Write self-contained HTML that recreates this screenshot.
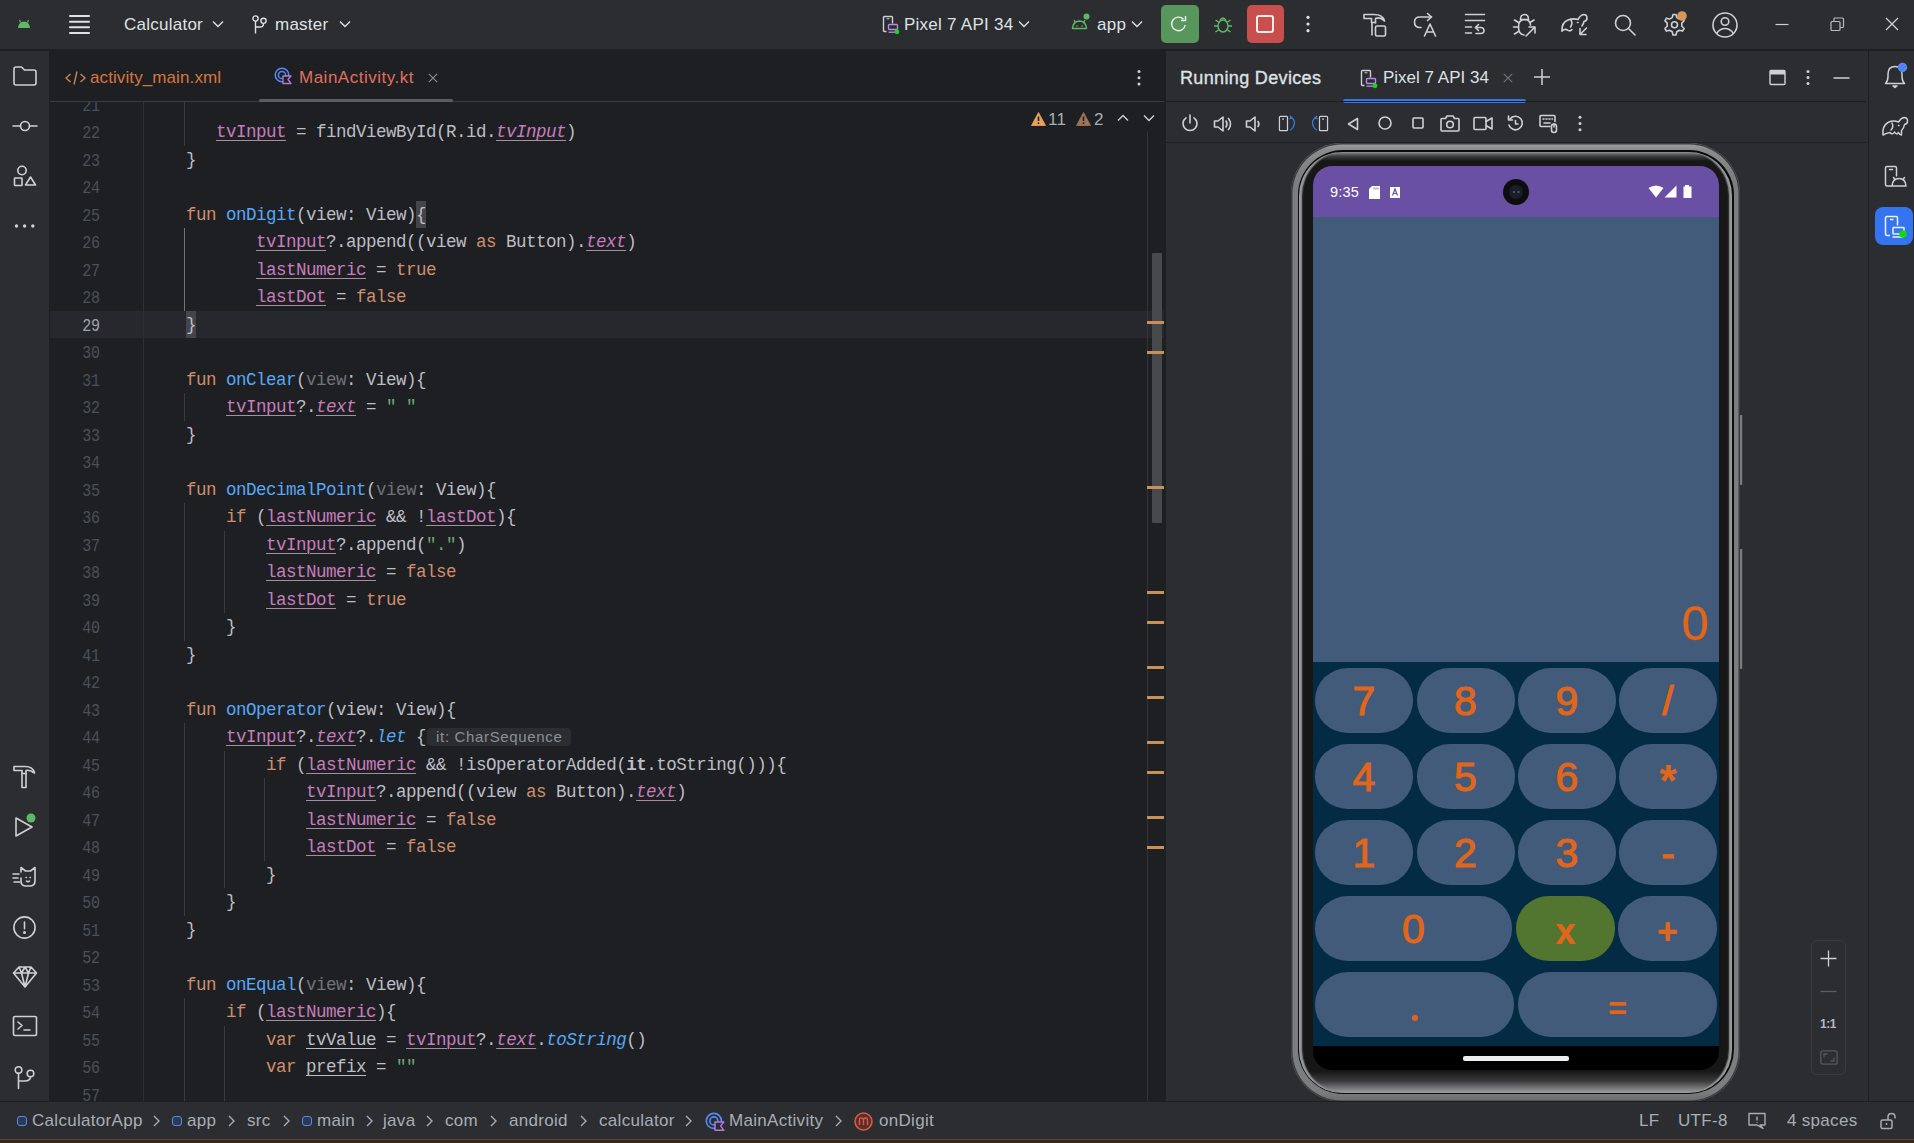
<!DOCTYPE html>
<html><head><meta charset="utf-8">
<style>
*{box-sizing:border-box;margin:0;padding:0}
html,body{width:1914px;height:1143px;overflow:hidden;background:#2b2d30;font-family:"Liberation Sans",sans-serif;color:#dfe1e5}
.abs{position:absolute}
svg{position:absolute;overflow:visible}
#title{left:0;top:0;width:1914px;height:49px;background:#2b2d30}
#tborder{left:0;top:49px;width:1914px;height:2px;background:#1e1f22}
.tt{position:absolute;font-size:17px;color:#dfe1e5;white-space:nowrap;top:15px;letter-spacing:0.25px}
#lstrip{left:0;top:51px;width:49px;height:1050px;background:#2b2d30}
#editor{left:50px;top:51px;width:1114px;height:1050px;background:#1e1f22;overflow:hidden}
#tabs{left:0;top:0;width:1114px;height:51px;background:#1e1f22;border-bottom:1px solid #393b40}
#code{left:0;top:51px;width:1114px;height:999px;overflow:hidden}
.ln{position:absolute;left:0;width:49.5px;text-align:right;font-family:"Liberation Mono",monospace;font-size:17.5px;letter-spacing:-0.5px;color:#4b5059;height:27.5px;line-height:30px;transform:scaleX(0.86);transform-origin:right center}
.cl{position:absolute;left:96px;font-family:"Liberation Mono",monospace;font-size:17.5px;letter-spacing:-0.5px;color:#bcbec4;height:27.5px;line-height:29px;white-space:pre}
.k{color:#cf8e6d}.f{color:#56a8f5}.p{color:#c77dbb;text-decoration:underline;text-underline-offset:3px;text-decoration-thickness:1px;text-decoration-color:#a1909e}
.i{font-style:italic}.s{color:#6aab73}.u{color:#6f737a}.b{font-weight:bold}
.ul{text-decoration:underline;text-underline-offset:3px;text-decoration-thickness:1px}
#vsep{left:1164px;top:51px;width:2px;height:1050px;background:#1e1f22}
#rpanel{left:1166px;top:51px;width:702px;height:1050px;background:#2b2d30}
#rstrip{left:1868px;top:51px;width:46px;height:1050px;background:#2b2d30;border-left:1px solid #1e1f22}
#status{left:0;top:1101px;width:1914px;height:38px;background:#2b2d30;border-top:1px solid #1e1f22}
#bottomline{left:0;top:1139px;width:1914px;height:4px;background:linear-gradient(#55473c 0,#55473c 1px,#3a2617 1px)}
.tab{position:absolute;top:17px;font-size:17px;white-space:nowrap}
.st{position:absolute;top:9px;font-size:17px;color:#a8adb5;white-space:nowrap;letter-spacing:0.3px}
.ln.cur{color:#a1a3ab}
.ig{position:absolute;width:1px;background:#393b40}
.ig.br{background:#6f737a}
.bm{display:inline-block;vertical-align:top;height:27.5px;background:#43454a}
.hint{display:inline-block;vertical-align:top;margin-top:5px;margin-left:1px;height:18px;line-height:18px;padding:0 9px 0 9px;border-radius:4px;background:#2b2d30;color:#8c8f96;font-family:"Liberation Sans",sans-serif;font-size:15px;letter-spacing:0.65px}
.btn{position:absolute;height:65px;border-radius:33px/32px;color:#e2661a;font-size:41px;font-weight:normal;-webkit-text-stroke:1px #e2661a;text-align:center;line-height:67px}
.btn span{display:inline-block}
.btn .op{font-weight:bold;-webkit-text-stroke:0.2px #e2661a;position:relative;top:1px;font-size:36px}
</style></head>
<body>
<div id="title" class="abs">
<!-- android logo -->
<svg style="left:17px;top:19px" width="14" height="10" viewBox="0 0 14 10"><path d="M1 9 Q1.5 3 7 2.5 Q12.5 3 13 9 Z" fill="#5fb865"/><path d="M3.5 3.5 L2.5 1 M10.5 3.5 L11.5 1" stroke="#5fb865" stroke-width="1.2"/></svg>
<!-- hamburger -->
<svg style="left:69px;top:14px" width="21" height="20" viewBox="0 0 21 20"><path d="M1 2h19M1 7.7h19M1 13.3h19M1 19h19" stroke="#dfe1e5" stroke-width="2" stroke-linecap="round"/></svg>
<div class="tt" style="left:124px">Calculator</div>
<svg style="left:212px;top:20px" width="12" height="8" viewBox="0 0 12 8"><path d="M1 1.5 L6 6.5 L11 1.5" stroke="#dfe1e5" stroke-width="1.4" fill="none"/></svg>
<!-- branch -->
<svg style="left:252px;top:15px" width="16" height="19" viewBox="0 0 16 19"><circle cx="3.5" cy="3.5" r="2.6" stroke="#dfe1e5" stroke-width="1.4" fill="none"/><circle cx="11.5" cy="5.8" r="2.6" stroke="#dfe1e5" stroke-width="1.4" fill="none"/><path d="M3.5 6.1 V18.5 M3.5 12 H8 Q11.5 12 11.5 8.4" stroke="#dfe1e5" stroke-width="1.4" fill="none"/></svg>
<div class="tt" style="left:275px">master</div>
<svg style="left:339px;top:20px" width="12" height="8" viewBox="0 0 12 8"><path d="M1 1.5 L6 6.5 L11 1.5" stroke="#dfe1e5" stroke-width="1.4" fill="none"/></svg>
<!-- device selector -->
<svg style="left:882px;top:15px" width="18" height="20" viewBox="0 0 18 20"><path d="M4.5 16.5 H2.5 Q1.5 16.5 1.5 15.5 V2.5 Q1.5 1.5 2.5 1.5 H9.5 Q10.5 1.5 10.5 2.5 V8.5" stroke="#ced0d6" stroke-width="1.4" fill="none"/><path d="M5 3.8 h2" stroke="#ced0d6" stroke-width="1.1" stroke-linecap="round"/><rect x="6.5" y="9.5" width="9" height="5" rx="1" stroke="#b88be6" stroke-width="1.4" fill="none"/><path d="M6.5 17.2 h7" stroke="#b88be6" stroke-width="1.3"/><circle cx="15" cy="16.8" r="2.4" fill="#11dd11"/></svg>
<div class="tt" style="left:904px">Pixel 7 API 34</div>
<svg style="left:1018px;top:20px" width="12" height="8" viewBox="0 0 12 8"><path d="M1 1.5 L6 6.5 L11 1.5" stroke="#dfe1e5" stroke-width="1.4" fill="none"/></svg>
<!-- app -->
<svg style="left:1071px;top:13px" width="20" height="18" viewBox="0 0 20 18"><path d="M1.5 15.5 Q2 8.5 8.5 8 Q15 8.5 15.5 15.5 Z" stroke="#5fb865" stroke-width="1.5" fill="none" stroke-linejoin="round"/><path d="M4.5 9.5 L3 7 M12.5 9.5 L14 7" stroke="#5fb865" stroke-width="1.4"/><circle cx="6" cy="13" r="0.8" fill="#5fb865"/><circle cx="11" cy="13" r="0.8" fill="#5fb865"/><circle cx="15.5" cy="3.5" r="3" fill="#5fb865"/></svg>
<div class="tt" style="left:1097px">app</div>
<svg style="left:1131px;top:20px" width="12" height="8" viewBox="0 0 12 8"><path d="M1 1.5 L6 6.5 L11 1.5" stroke="#dfe1e5" stroke-width="1.4" fill="none"/></svg>
<!-- run buttons -->
<div class="abs" style="left:1161px;top:5px;width:38px;height:38px;border-radius:5px;background:#57965c"></div>
<svg style="left:1171px;top:15px" width="17" height="18" viewBox="0 0 17 18"><path d="M14.2 10 A6.8 6.8 0 1 1 12.5 4.3" stroke="#eef0ee" stroke-width="1.4" fill="none"/><path d="M14.5 1 V5.5 H10" stroke="#eef0ee" stroke-width="1.4" fill="none"/></svg>
<svg style="left:1213px;top:15px" width="20" height="18" viewBox="0 0 20 18"><ellipse cx="10" cy="11" rx="5" ry="6" stroke="#5fb865" stroke-width="1.5" fill="none"/><path d="M7 5.5 Q10 0.5 13 5.5" stroke="#5fb865" stroke-width="1.5" fill="none"/><path d="M5 11 H1 M15 11 H19 M5.5 7 L2.5 5 M14.5 7 L17.5 5 M5.5 15 L2.5 17 M14.5 15 L17.5 17" stroke="#5fb865" stroke-width="1.5"/></svg>
<div class="abs" style="left:1247px;top:5px;width:37px;height:38px;border-radius:5px;background:#c94f4f"></div>
<div class="abs" style="left:1256px;top:15px;width:18px;height:18px;border-radius:3px;border:2px solid #f3eee6"></div>
<svg style="left:1305px;top:15px" width="6" height="19" viewBox="0 0 6 19"><circle cx="3" cy="2.3" r="1.6" fill="#dfe1e5"/><circle cx="3" cy="9" r="1.6" fill="#dfe1e5"/><circle cx="3" cy="15.7" r="1.6" fill="#dfe1e5"/></svg>
<!-- right icons -->
<svg style="left:1363px;top:13px" width="24" height="24" viewBox="0 0 24 24" fill="none" stroke="#ced0d6" stroke-width="1.6" stroke-linejoin="round"><path d="M1 1.5 H11 Q20 1.5 21.5 8 Q17 3.5 12.5 5.5 L12.5 9.5 L8.5 9.5 L8.5 5.5 L1 5.5 Z"/><path d="M9 9.5 V22.5 M12.5 9.5 V10.5"/><rect x="12.5" y="13" width="10" height="10" rx="1.5"/></svg>
<svg style="left:1413px;top:13px" width="24" height="24" viewBox="0 0 24 24" fill="none" stroke="#ced0d6" stroke-width="1.6" stroke-linejoin="round" stroke-linecap="round"><path d="M18.5 4 H7 Q1.5 4 1.5 9 Q1.5 14.5 7 14.5 H8"/><path d="M14.5 0.5 L18.5 4 L14.5 7.5"/><path d="M11.5 23 L17 11 L22.5 23 M13.5 19 H20.5"/></svg>
<svg style="left:1464px;top:13px" width="22" height="22" viewBox="0 0 22 22" fill="none" stroke="#ced0d6" stroke-width="1.6" stroke-linecap="round"><path d="M1.5 1.5 H20.5 M1.5 7.5 H20.5 M1.5 14 H7.5 M1.5 20 H7.5"/><path d="M12 14.5 H16.5 Q20 14.5 20 17.5 Q20 20.5 16.5 20.5 H12"/><path d="M14.5 11.5 L11.5 14.5 L14.5 17.5"/></svg>
<svg style="left:1513px;top:13px" width="24" height="24" viewBox="0 0 24 24" fill="none" stroke="#ced0d6" stroke-width="1.6" stroke-linejoin="round" stroke-linecap="round"><path d="M7.5 6.5 Q7.5 1.5 11.5 1.5 Q15.5 1.5 15.5 6.5 Z"/><path d="M17.5 12 Q17 6.5 11.5 6.5 Q5.5 6.5 5.5 14 Q5.5 21.5 11 22"/><path d="M5.5 9.5 L1.5 7 M5.5 14 H0.5 M5.5 18.5 L1.5 21 M17 9.5 L21 7"/><path d="M13 23 L22 14 M16 14 H22 V20"/></svg>
<svg style="left:1561px;top:13px" width="27" height="24" viewBox="0 0 27 24" fill="none" stroke="#ced0d6" stroke-width="1.6" stroke-linejoin="round" stroke-linecap="round"><path d="M1 18 Q0.5 9.5 7 7 Q12 5 17 6.5 Q19.5 2 22.5 1.5 Q26 1.5 26 5 Q26 8 23 8.5 Q22.5 11 21 13"/><path d="M1 18 Q4 15.5 6.5 17 Q9 19 11 16.5"/><path d="M10 7 Q12 10.5 9.5 14"/><path d="M16.5 9.5 h0.5"/><path d="M25.5 15 L19 21.5 M19 15.5 V21.5 H25"/></svg>
<svg style="left:1614px;top:14px" width="22" height="22" viewBox="0 0 22 22" fill="none" stroke="#ced0d6" stroke-width="1.6"><circle cx="9" cy="9" r="7.5"/><path d="M14.5 14.5 L21 21" stroke-linecap="round"/></svg>
<svg style="left:1663px;top:13px" width="24" height="24" viewBox="0 0 24 24" fill="none" stroke="#ced0d6" stroke-width="1.6" stroke-linejoin="round"><path d="M10 1.5 H13 L13.8 4.6 L16.5 6.1 L19.6 5.2 L21.1 7.8 L18.8 10.1 V13.2 L21.1 15.5 L19.6 18.1 L16.5 17.2 L13.8 18.8 L13 22 H10 L9.2 18.8 L6.5 17.2 L3.4 18.1 L1.9 15.5 L4.2 13.2 V10.1 L1.9 7.8 L3.4 5.2 L6.5 6.1 L9.2 4.6 Z"/><circle cx="11.5" cy="11.7" r="3"/></svg>
<svg style="left:1676px;top:10px" width="12" height="12"><circle cx="6" cy="6" r="4.8" fill="#d8955c"/></svg>
<svg style="left:1712px;top:12px" width="26" height="26" viewBox="0 0 26 26" fill="none" stroke="#ced0d6" stroke-width="1.6"><circle cx="13" cy="13" r="12"/><circle cx="13" cy="9.5" r="3.8"/><path d="M4.5 21.5 Q8 16.5 13 16.5 Q18 16.5 21.5 21.5"/></svg>
<svg style="left:1775px;top:20px" width="14" height="8"><path d="M0.5 4.5 H13.5" stroke="#ced0d6" stroke-width="1.2"/></svg>
<svg style="left:1830px;top:17px" width="15" height="15" viewBox="0 0 15 15" fill="none" stroke="#b8bac0" stroke-width="1.2"><rect x="1" y="4.5" width="9" height="9" rx="1"/><path d="M4 4.5 V2 Q4 1 5 1 H12.5 Q13.5 1 13.5 2 V9.5 Q13.5 10.5 12.5 10.5 H10"/></svg>
<svg style="left:1885px;top:17px" width="14" height="14" viewBox="0 0 14 14"><path d="M1 1 L13 13 M13 1 L1 13" stroke="#ced0d6" stroke-width="1.3"/></svg>
</div>
<div id="tborder" class="abs"></div>
<div id="lstrip" class="abs">
<svg style="left:13px;top:15px" width="24" height="20" viewBox="0 0 24 20" fill="none" stroke="#ced0d6" stroke-width="1.6" stroke-linejoin="round" stroke-linecap="round"><path d="M1 3 Q1 1 3 1 H8.5 L11.5 4 H21 Q23 4 23 6 V17 Q23 19 21 19 H3 Q1 19 1 17 Z"/></svg>
<svg style="left:12px;top:69px" width="26" height="12" viewBox="0 0 26 12" fill="none" stroke="#ced0d6" stroke-width="1.6" stroke-linejoin="round" stroke-linecap="round"><circle cx="13" cy="6" r="4.5"/><path d="M1 6 H8.5 M17.5 6 H25"/></svg>
<svg style="left:13px;top:114px" width="24" height="22" viewBox="0 0 24 22" fill="none" stroke="#ced0d6" stroke-width="1.6" stroke-linejoin="round" stroke-linecap="round"><circle cx="9" cy="5.5" r="4.2"/><rect x="1.5" y="13" width="7.5" height="7.5" rx="0.5"/><path d="M17.5 12 L22.5 20 H12.5 Z"/></svg>
<svg style="left:13px;top:171px" width="24" height="8" viewBox="0 0 24 8"><circle cx="3.5" cy="4" r="1.7" fill="#ced0d6"/><circle cx="11.6" cy="4" r="1.7" fill="#ced0d6"/><circle cx="19.8" cy="4" r="1.7" fill="#ced0d6"/></svg>
<svg style="left:13px;top:714px" width="23" height="24" viewBox="0 0 23 24" fill="none" stroke="#ced0d6" stroke-width="1.6" stroke-linejoin="round" stroke-linecap="round"><path d="M1 1.5 H12 Q20 1.5 21.5 8 Q17 4.5 13 5.5 V8.5 H9 V5.5 H1 Z"/><path d="M9 8.5 V22.5 H13 V8.5"/></svg>
<svg style="left:14px;top:764px" width="24" height="24" viewBox="0 0 24 24" fill="none" stroke="#ced0d6" stroke-width="1.6" stroke-linejoin="round" stroke-linecap="round"><path d="M2 3 L18 12 L2 21 Z"/></svg>
<svg style="left:25px;top:761px" width="12" height="12"><circle cx="6" cy="6" r="4.5" fill="#5fb865"/></svg>
<svg style="left:12px;top:815px" width="26" height="22" viewBox="0 0 26 22" fill="none" stroke="#ced0d6" stroke-width="1.6" stroke-linejoin="round" stroke-linecap="round"><path d="M9 6 L9 1.5 L13.5 5 H18.5 L23 1.5 V15 Q23 20 17.5 20 H14 Q9 20 9 15 V12"/><path d="M1 8 H7 M1 12 H6 M2 16 H8"/><path d="M14 11.5 h0.3 M18 11.5 h0.3 M14.5 15 Q16 16.5 17.5 15"/></svg>
<svg style="left:12px;top:864px" width="26" height="26" viewBox="0 0 26 26" fill="none" stroke="#ced0d6" stroke-width="1.6" stroke-linejoin="round" stroke-linecap="round"><circle cx="12.5" cy="12.5" r="10.6"/><path d="M12.5 7 V13.8"/><circle cx="12.5" cy="17.6" r="0.7" fill="#ced0d6"/></svg>
<svg style="left:12px;top:914px" width="26" height="24" viewBox="0 0 26 24" fill="none" stroke="#ced0d6" stroke-width="1.6" stroke-linejoin="round" stroke-linecap="round"><path d="M7 2 H19 L24.5 8 L13 22 L1.5 8 Z M1.5 8 H24.5 M9.5 8 L13 22 L16.5 8 M7 2 L9.5 8 L13 2 L16.5 8 L19 2"/></svg>
<svg style="left:12px;top:964px" width="26" height="22" viewBox="0 0 26 22" fill="none" stroke="#ced0d6" stroke-width="1.6" stroke-linejoin="round" stroke-linecap="round"><rect x="1.5" y="1.5" width="23" height="19" rx="1.5"/><path d="M6 7 L10 10.5 L6 14 M12 15 H18"/></svg>
<svg style="left:13px;top:1014px" width="24" height="26" viewBox="0 0 24 26" fill="none" stroke="#ced0d6" stroke-width="1.6" stroke-linejoin="round" stroke-linecap="round"><circle cx="5.5" cy="5" r="3.3"/><circle cx="17.5" cy="8.5" r="3.3"/><path d="M5.5 8.3 V23.5 M5.5 16 H11.5 Q17.5 16 17.5 11.8"/></svg>
</div>
<div id="editor" class="abs">
  <div id="tabs" class="abs">
<svg style="left:15px;top:20px" width="21" height="14" viewBox="0 0 21 14" fill="none" stroke="#c9834f" stroke-width="1.4"><path d="M5.5 3 L1 7 L5.5 11 M15.5 3 L20 7 L15.5 11 M12 0.5 L9 13.5"/></svg>
<div class="tab" style="left:40px;color:#d5763f;letter-spacing:0.1px">activity_main.xml</div>
<svg style="left:224px;top:16px" width="18" height="18" viewBox="0 0 18 18"><circle cx="8" cy="8" r="6.8" fill="none" stroke="#548af7" stroke-width="1.5"/><circle cx="8" cy="8" r="3.6" fill="none" stroke="#548af7" stroke-width="1.5"/><path d="M9 9 H17 L14 12.5 L17 16.5 H9 Z" fill="#1e1f22" stroke="#b57ad9" stroke-width="1.3" stroke-linejoin="round"/></svg>
<div class="tab" style="left:249px;color:#e0705d;letter-spacing:0.5px">MainActivity.kt</div>
<svg style="left:378px;top:22px" width="10" height="10" viewBox="0 0 10 10"><path d="M0.8 0.8 L9.2 9.2 M9.2 0.8 L0.8 9.2" stroke="#8c8f96" stroke-width="1.1"/></svg>
<div class="abs" style="left:209px;top:48px;width:194px;height:3px;border-radius:2px;background:#5a5d63"></div>
<svg style="left:1086px;top:18px" width="6" height="18" viewBox="0 0 6 18"><circle cx="3" cy="2.5" r="1.5" fill="#ced0d6"/><circle cx="3" cy="8.8" r="1.5" fill="#ced0d6"/><circle cx="3" cy="15" r="1.5" fill="#ced0d6"/></svg>
</div>
  <div id="code" class="abs">
<div class="abs" style="left:0;top:208.75px;width:1114px;height:27.5px;background:#26282e"></div>
<div class="abs" style="left:93px;top:0;width:1px;height:999px;background:#2d2f33"></div>
<div class="ln" style="top:-11.25px">21</div>
<div class="ln" style="top:16.25px">22</div>
<div class="cl" style="top:16.25px">       <span class="p">tvInput</span> = findViewById(R.id.<span class="p i">tvInput</span>)</div>
<div class="ln" style="top:43.75px">23</div>
<div class="cl" style="top:43.75px">    }</div>
<div class="ln" style="top:71.25px">24</div>
<div class="ln" style="top:98.75px">25</div>
<div class="cl" style="top:98.75px">    <span class="k">fun</span> <span class="f">onDigit</span>(view: View)<span class="bm">{</span></div>
<div class="ln" style="top:126.25px">26</div>
<div class="cl" style="top:126.25px">           <span class="p">tvInput</span>?.append((view <span class="k">as</span> Button).<span class="p i">text</span>)</div>
<div class="ln" style="top:153.75px">27</div>
<div class="cl" style="top:153.75px">           <span class="p">lastNumeric</span> = <span class="k">true</span></div>
<div class="ln" style="top:181.25px">28</div>
<div class="cl" style="top:181.25px">           <span class="p">lastDot</span> = <span class="k">false</span></div>
<div class="ln cur" style="top:208.75px">29</div>
<div class="cl" style="top:208.75px">    <span class="bm">}</span></div>
<div class="ln" style="top:236.25px">30</div>
<div class="ln" style="top:263.75px">31</div>
<div class="cl" style="top:263.75px">    <span class="k">fun</span> <span class="f">onClear</span>(<span class="u">view</span>: View){</div>
<div class="ln" style="top:291.25px">32</div>
<div class="cl" style="top:291.25px">        <span class="p">tvInput</span>?.<span class="p i">text</span> = <span class="s">" "</span></div>
<div class="ln" style="top:318.75px">33</div>
<div class="cl" style="top:318.75px">    }</div>
<div class="ln" style="top:346.25px">34</div>
<div class="ln" style="top:373.75px">35</div>
<div class="cl" style="top:373.75px">    <span class="k">fun</span> <span class="f">onDecimalPoint</span>(<span class="u">view</span>: View){</div>
<div class="ln" style="top:401.25px">36</div>
<div class="cl" style="top:401.25px">        <span class="k">if</span> (<span class="p">lastNumeric</span> &amp;&amp; !<span class="p">lastDot</span>){</div>
<div class="ln" style="top:428.75px">37</div>
<div class="cl" style="top:428.75px">            <span class="p">tvInput</span>?.append(<span class="s">"."</span>)</div>
<div class="ln" style="top:456.25px">38</div>
<div class="cl" style="top:456.25px">            <span class="p">lastNumeric</span> = <span class="k">false</span></div>
<div class="ln" style="top:483.75px">39</div>
<div class="cl" style="top:483.75px">            <span class="p">lastDot</span> = <span class="k">true</span></div>
<div class="ln" style="top:511.25px">40</div>
<div class="cl" style="top:511.25px">        }</div>
<div class="ln" style="top:538.75px">41</div>
<div class="cl" style="top:538.75px">    }</div>
<div class="ln" style="top:566.25px">42</div>
<div class="ln" style="top:593.75px">43</div>
<div class="cl" style="top:593.75px">    <span class="k">fun</span> <span class="f">onOperator</span>(view: View){</div>
<div class="ln" style="top:621.25px">44</div>
<div class="cl" style="top:621.25px">        <span class="p">tvInput</span>?.<span class="p i">text</span>?.<span class="f i">let</span> {<span class="hint">it: CharSequence</span></div>
<div class="ln" style="top:648.75px">45</div>
<div class="cl" style="top:648.75px">            <span class="k">if</span> (<span class="p">lastNumeric</span> &amp;&amp; !isOperatorAdded(<span class="b">it</span>.toString())){</div>
<div class="ln" style="top:676.25px">46</div>
<div class="cl" style="top:676.25px">                <span class="p">tvInput</span>?.append((view <span class="k">as</span> Button).<span class="p i">text</span>)</div>
<div class="ln" style="top:703.75px">47</div>
<div class="cl" style="top:703.75px">                <span class="p">lastNumeric</span> = <span class="k">false</span></div>
<div class="ln" style="top:731.25px">48</div>
<div class="cl" style="top:731.25px">                <span class="p">lastDot</span> = <span class="k">false</span></div>
<div class="ln" style="top:758.75px">49</div>
<div class="cl" style="top:758.75px">            }</div>
<div class="ln" style="top:786.25px">50</div>
<div class="cl" style="top:786.25px">        }</div>
<div class="ln" style="top:813.75px">51</div>
<div class="cl" style="top:813.75px">    }</div>
<div class="ln" style="top:841.25px">52</div>
<div class="ln" style="top:868.75px">53</div>
<div class="cl" style="top:868.75px">    <span class="k">fun</span> <span class="f">onEqual</span>(<span class="u">view</span>: View){</div>
<div class="ln" style="top:896.25px">54</div>
<div class="cl" style="top:896.25px">        <span class="k">if</span> (<span class="p">lastNumeric</span>){</div>
<div class="ln" style="top:923.75px">55</div>
<div class="cl" style="top:923.75px">            <span class="k">var</span> <span class="ul">tvValue</span> = <span class="p">tvInput</span>?.<span class="p i">text</span>.<span class="f i">toString</span>()</div>
<div class="ln" style="top:951.25px">56</div>
<div class="cl" style="top:951.25px">            <span class="k">var</span> <span class="ul">prefix</span> = <span class="s">""</span></div>
<div class="ln" style="top:978.75px">57</div>
<div class="ig" style="left:134px;top:-11.25px;height:55.00px"></div>
<div class="ig br" style="left:134px;top:126.25px;height:82.50px"></div>
<div class="ig" style="left:134px;top:291.25px;height:27.50px"></div>
<div class="ig" style="left:134px;top:401.25px;height:137.50px"></div>
<div class="ig" style="left:174px;top:428.75px;height:82.50px"></div>
<div class="ig" style="left:134px;top:621.25px;height:192.50px"></div>
<div class="ig" style="left:174px;top:648.75px;height:137.50px"></div>
<div class="ig" style="left:214px;top:676.25px;height:82.50px"></div>
<div class="ig" style="left:134px;top:896.25px;height:110.00px"></div>
<div class="ig" style="left:174px;top:923.75px;height:82.50px"></div>
</div>
<div class="abs" style="left:1097px;top:80px;width:1px;height:970px;background:#313337"></div>
<div class="abs" style="left:1102px;top:202px;width:10px;height:270px;border-radius:1px;background:#48494d"></div>
<div class="abs" style="left:1097px;top:270.1px;width:17px;height:3px;background:#c8915a"></div>
<div class="abs" style="left:1097px;top:300.1px;width:17px;height:3px;background:#c8915a"></div>
<div class="abs" style="left:1097px;top:435.4px;width:17px;height:3px;background:#c8915a"></div>
<div class="abs" style="left:1097px;top:539.8px;width:17px;height:3px;background:#c8915a"></div>
<div class="abs" style="left:1097px;top:569.7px;width:17px;height:3px;background:#c8915a"></div>
<div class="abs" style="left:1097px;top:614.8px;width:17px;height:3px;background:#c8915a"></div>
<div class="abs" style="left:1097px;top:644.8px;width:17px;height:3px;background:#c8915a"></div>
<div class="abs" style="left:1097px;top:689.7px;width:17px;height:3px;background:#c8915a"></div>
<div class="abs" style="left:1097px;top:719.5px;width:17px;height:3px;background:#c8915a"></div>
<div class="abs" style="left:1097px;top:764.7px;width:17px;height:3px;background:#c8915a"></div>
<div class="abs" style="left:1097px;top:794.9px;width:17px;height:3px;background:#c8915a"></div>
<svg style="left:981px;top:61px" width="15" height="14" viewBox="0 0 15 14"><path d="M7.5 0.5 L14.5 13.5 H0.5 Z" fill="#e8a25c" stroke="#e8a25c" stroke-linejoin="round" stroke-width="0.8"/><path d="M7.5 4.5 V9" stroke="#1e1f22" stroke-width="1.6"/><circle cx="7.5" cy="11.2" r="0.9" fill="#1e1f22"/></svg>
<div class="abs" style="left:998px;top:59px;font-size:17px;color:#a8adb5;letter-spacing:0.3px">11</div>
<svg style="left:1026px;top:61px" width="15" height="14" viewBox="0 0 15 14"><path d="M7.5 0.5 L14.5 13.5 H0.5 Z" fill="#9e7356" stroke="#9e7356" stroke-linejoin="round" stroke-width="0.8"/><path d="M7.5 4.5 V9" stroke="#1e1f22" stroke-width="1.6"/><circle cx="7.5" cy="11.2" r="0.9" fill="#1e1f22"/></svg>
<div class="abs" style="left:1044px;top:59px;font-size:17px;color:#a8adb5">2</div>
<svg style="left:1067px;top:63px" width="12" height="8" viewBox="0 0 12 8"><path d="M1 6.5 L6 1.5 L11 6.5" stroke="#ced0d6" stroke-width="1.4" fill="none"/></svg>
<svg style="left:1093px;top:63px" width="12" height="8" viewBox="0 0 12 8"><path d="M1 1.5 L6 6.5 L11 1.5" stroke="#ced0d6" stroke-width="1.4" fill="none"/></svg>
<div class="abs" style="left:1114px;top:51px;width:2px;height:999px;background:#2b2d30"></div>
</div>
<div id="vsep" class="abs"></div>
<div class="abs" style="left:49px;top:51px;width:1px;height:1050px;background:#1e1f22"></div>
<div id="rpanel" class="abs">
<div class="abs" style="left:14px;top:17px;font-size:18px;line-height:20px;font-weight:normal;-webkit-text-stroke:0.35px #dfe1e5;color:#dfe1e5;white-space:nowrap;letter-spacing:0.35px">Running Devices</div>
<svg style="left:194px;top:18px" width="18" height="20" viewBox="0 0 18 20"><path d="M4.5 16.5 H2.5 Q1.5 16.5 1.5 15.5 V2.5 Q1.5 1.5 2.5 1.5 H9.5 Q10.5 1.5 10.5 2.5 V8.5" stroke="#ced0d6" stroke-width="1.4" fill="none"/><path d="M5 3.8 h2" stroke="#ced0d6" stroke-width="1.1" stroke-linecap="round"/><rect x="6.5" y="9.5" width="9" height="5" rx="1" stroke="#b88be6" stroke-width="1.4" fill="none"/><path d="M6.5 17.2 h7" stroke="#b88be6" stroke-width="1.3"/><circle cx="15" cy="16.8" r="2.4" fill="#11dd11"/></svg>
<div class="abs" style="left:217px;top:17px;font-size:17px;color:#dfe1e5;white-space:nowrap">Pixel 7 API 34</div>
<svg style="left:337px;top:22px" width="10" height="10" viewBox="0 0 10 10"><path d="M0.8 0.8 L9.2 9.2 M9.2 0.8 L0.8 9.2" stroke="#6f737a" stroke-width="1.2"/></svg>
<svg style="left:367px;top:17px" width="18" height="18" viewBox="0 0 18 18"><path d="M9 1 V17 M1 9 H17" stroke="#ced0d6" stroke-width="1.5"/></svg>
<div class="abs" style="left:177px;top:48px;width:183px;height:4px;border-radius:2px;background:#3574f0"></div>
<svg style="left:603px;top:18px" width="17" height="17" viewBox="0 0 17 17"><rect x="1" y="1.5" width="15" height="14" rx="1" fill="none" stroke="#ced0d6" stroke-width="1.4"/><rect x="1" y="1.5" width="15" height="4" fill="#ced0d6"/></svg>
<svg style="left:639px;top:18px" width="6" height="18" viewBox="0 0 6 18"><circle cx="3" cy="2.5" r="1.5" fill="#ced0d6"/><circle cx="3" cy="8.5" r="1.5" fill="#ced0d6"/><circle cx="3" cy="14.5" r="1.5" fill="#ced0d6"/></svg>
<svg style="left:667px;top:25px" width="17" height="4"><path d="M0.5 2 H16.5" stroke="#ced0d6" stroke-width="1.5"/></svg>
<div class="abs" style="left:0;top:50px;width:700px;height:1px;background:#1e1f22"></div>
<div class="abs" style="left:0;top:91px;width:700px;height:1px;background:#1e1f22"></div>
<!-- device toolbar -->
<svg style="left:15px;top:63px" width="18" height="18" viewBox="0 0 18 18" fill="none" stroke="#ced0d6" stroke-width="1.6" stroke-linejoin="round" stroke-linecap="round" stroke-width="1.5"><path d="M5 3.8 A7 7 0 1 0 13 3.8"/><path d="M9 1 V9"/></svg>
<svg style="left:47px;top:64px" width="20" height="18" viewBox="0 0 20 18" fill="none" stroke="#ced0d6" stroke-width="1.6" stroke-linejoin="round" stroke-linecap="round" stroke-width="1.4"><path d="M1.5 6 H5 L10 2 V16 L5 12 H1.5 Z"/><path d="M13 6 Q15 9 13 12 M15.5 3.5 Q19.5 9 15.5 14.5"/></svg>
<svg style="left:79px;top:64px" width="16" height="18" viewBox="0 0 16 18" fill="none" stroke="#ced0d6" stroke-width="1.6" stroke-linejoin="round" stroke-linecap="round" stroke-width="1.4"><path d="M1.5 6 H5 L10 2 V16 L5 12 H1.5 Z"/><path d="M13 6.5 Q14.8 9 13 11.5"/></svg>
<svg style="left:112px;top:64px" width="19" height="17" viewBox="0 0 20 19" fill="none" stroke-width="1.4"><rect x="1" y="1.5" width="9" height="16" rx="1" stroke="#ced0d6"/><path d="M4 4.5 h2" stroke="#ced0d6"/><path d="M13 2 Q19 5 17.5 11 Q16.5 15 13 17" stroke="#3d7bf0"/><path d="M12.5 1 L15 3.2 L12 4.5" stroke="#3d7bf0"/></svg>
<svg style="left:144px;top:64px" width="19" height="17" viewBox="0 0 20 19" fill="none" stroke-width="1.4"><rect x="10" y="1.5" width="9" height="16" rx="1" stroke="#ced0d6"/><path d="M13 4.5 h2" stroke="#ced0d6"/><path d="M7 2 Q1 5 2.5 11 Q3.5 15 7 17" stroke="#3d7bf0"/><path d="M7.5 1 L5 3.2 L8 4.5" stroke="#3d7bf0"/></svg>
<svg style="left:181px;top:66px" width="12" height="14" viewBox="0 0 12 14" fill="none" stroke="#ced0d6" stroke-width="1.6" stroke-linejoin="round" stroke-linecap="round" stroke-width="1.4"><path d="M10.5 1.5 V12.5 L1.5 7 Z"/></svg>
<svg style="left:212px;top:65px" width="14" height="14" viewBox="0 0 14 14" fill="none" stroke="#ced0d6" stroke-width="1.6" stroke-linejoin="round" stroke-linecap="round" stroke-width="1.4"><circle cx="7" cy="7" r="6"/></svg>
<svg style="left:246px;top:66px" width="12" height="12" viewBox="0 0 12 12" fill="none" stroke="#ced0d6" stroke-width="1.6" stroke-linejoin="round" stroke-linecap="round" stroke-width="1.4"><rect x="1" y="1" width="10" height="10" rx="1"/></svg>
<svg style="left:274px;top:64px" width="20" height="17" viewBox="0 0 20 17" fill="none" stroke="#ced0d6" stroke-width="1.6" stroke-linejoin="round" stroke-linecap="round" stroke-width="1.4"><path d="M1 4.5 Q1 3.5 2 3.5 H5.5 L7 1 H13 L14.5 3.5 H18 Q19 3.5 19 4.5 V15 Q19 16 18 16 H2 Q1 16 1 15 Z"/><circle cx="10" cy="9.5" r="3.3"/></svg>
<svg style="left:307px;top:65px" width="20" height="15" viewBox="0 0 20 15" fill="none" stroke="#ced0d6" stroke-width="1.6" stroke-linejoin="round" stroke-linecap="round" stroke-width="1.4"><rect x="1" y="1.5" width="12" height="12" rx="1"/><path d="M13 5.5 L19 2 V13 L13 9.5"/></svg>
<svg style="left:341px;top:64px" width="17" height="17" viewBox="0 0 17 17" fill="none" stroke="#ced0d6" stroke-width="1.6" stroke-linejoin="round" stroke-linecap="round" stroke-width="1.4"><path d="M3 4 A6.8 6.8 0 1 1 2 10"/><path d="M1.5 1 V5 H5.5"/><path d="M8.5 5.5 V9 H11"/></svg>
<svg style="left:373px;top:63px" width="19" height="20" viewBox="0 0 19 20" fill="none" stroke="#ced0d6" stroke-width="1.6" stroke-linejoin="round" stroke-linecap="round" stroke-width="1.3"><path d="M11 12.5 H2 Q1 12.5 1 11.5 V2.5 Q1 1.5 2 1.5 H15 Q16 1.5 16 2.5 V7.5"/><path d="M4 5 h1 M7 5 h1 M10 5 h1 M13 5 h0.5 M5 9 h6"/><rect x="12.5" y="10" width="5" height="8.5" rx="2.5"/><path d="M15 10 V13"/></svg>
<svg style="left:411px;top:64px" width="6" height="17" viewBox="0 0 6 17"><circle cx="3" cy="2.2" r="1.5" fill="#ced0d6"/><circle cx="3" cy="8.5" r="1.5" fill="#ced0d6"/><circle cx="3" cy="14.8" r="1.5" fill="#ced0d6"/></svg>
</div>
<div id="rstrip" class="abs">
<svg style="left:14.5px;top:13px" width="22" height="24" viewBox="0 0 22 24" fill="none" stroke="#ced0d6" stroke-width="1.5" stroke-linejoin="round" stroke-linecap="round"><path d="M1.5 19.5 Q4 17 4 12.5 V10 Q4 2.5 11 2.5 Q18 2.5 18 10 V12.5 Q18 17 20.5 19.5 Z"/><path d="M9 22 L11 23.5 L13 22 Z" fill="#ced0d6"/></svg>
<svg style="left:28px;top:11px" width="11" height="11"><circle cx="5.5" cy="5.5" r="4.7" fill="#548af7"/><path d="M2.5 6.5 L6.5 2.5 M4 8.5 L8.5 4" stroke="#3a6fd8" stroke-width="0.9"/></svg>
<svg style="left:12px;top:64px" width="28" height="22" viewBox="0 0 28 22" fill="none" stroke="#ced0d6" stroke-width="1.5" stroke-linejoin="round" stroke-linecap="round"><path d="M2 20 Q1 11 7 7.5 Q12 5 17.5 7 Q20 3 23 2.5 Q26.5 2.5 26.5 6 Q26.5 9 23.5 9.5 Q23 13 20.5 15.5 V20 Q18.5 20 17.5 17.5 Q15.5 20.5 13.5 17 Q11.5 20.5 9 17.5 Q5.5 18 2 20 Z"/><path d="M11 8 Q13 12 10 15"/><path d="M17.5 10.5 h0.5"/></svg>
<svg style="left:15px;top:114px" width="24" height="24" viewBox="0 0 24 24" fill="none" stroke="#ced0d6" stroke-width="1.5" stroke-linejoin="round" stroke-linecap="round"><path d="M7.5 21 H3 Q1.5 21 1.5 19.5 V3 Q1.5 1.5 3 1.5 H11 Q12.5 1.5 12.5 3 V11"/><path d="M5.5 4.5 h3"/><path d="M8 21 Q8.5 13.5 15 13.5 Q21.5 13.5 22 21 Z"/><path d="M11 14.5 L9.5 12.5 M19 14.5 L20.5 12.5"/></svg>
<div class="abs" style="left:6px;top:156px;width:38px;height:38px;border-radius:8px;background:#3574f0"></div>
<svg style="left:15px;top:164px" width="24" height="24" viewBox="0 0 24 24" fill="none" stroke="#f2f0ea" stroke-width="1.5" stroke-linejoin="round"><path d="M6 20.5 H3 Q1.5 20.5 1.5 19 V3 Q1.5 1.5 3 1.5 H12 Q13.5 1.5 13.5 3 V10.5"/><path d="M6 4.5 h3.5"/><rect x="9" y="12.5" width="11" height="6.5" rx="0.5"/><path d="M8.5 22 h11"/></svg>
<svg style="left:29px;top:178px" width="10" height="10"><circle cx="5" cy="5" r="3.8" fill="#11d911"/></svg>
</div>
<div class="abs" style="left:1811px;top:940px;width:35px;height:135px;border:1px solid #393b40;border-radius:6px"></div>
<svg style="left:1820px;top:950px" width="17" height="17" viewBox="0 0 17 17"><path d="M8.5 0.5 V16.5 M0.5 8.5 H16.5" stroke="#ced0d6" stroke-width="1.3"/></svg>
<svg style="left:1820px;top:990px" width="17" height="3"><path d="M0.5 1.5 H16.5" stroke="#5a5d63" stroke-width="1.3"/></svg>
<div class="abs" style="left:1820px;top:1017px;font-size:12px;font-weight:bold;color:#b7b9be;letter-spacing:-0.5px">1:1</div>
<svg style="left:1820px;top:1050px" width="18" height="15" viewBox="0 0 18 15" fill="none" stroke="#55585e" stroke-width="1.3"><rect x="0.8" y="0.8" width="16.4" height="13.4" rx="2"/><path d="M4 7.5 V4 H7.5 M14 7.5 V11 H10.5"/></svg>
<div class="abs" style="left:1739.5px;top:415px;width:3px;height:70px;background:#7a7b7d;border-radius:1px;border-right:1px solid #3a3b3d"></div>
<div class="abs" style="left:1739.5px;top:549px;width:3px;height:120px;background:#7a7b7d;border-radius:1px;border-right:1px solid #3a3b3d"></div>
<div id="phone" class="abs" style="left:1291px;top:143px;width:449px;height:959px">
<div class="abs" style="left:0;top:0;width:449px;height:959px;border-radius:51px;background:linear-gradient(180deg,#9fa0a2 0px,#8a8b8d 7px,#7c7d7f 40px,#7c7d7f calc(100% - 10px),#6a6b6d 100%);box-shadow:inset 0 0 0 1.5px #3c3d3f"></div>
<div class="abs" style="left:6.5px;top:7px;width:436px;height:944px;border-radius:45px;background:#0b0b0c"></div>
<div class="abs" style="left:8px;top:8.5px;width:433px;height:941px;border-radius:43.5px;background:linear-gradient(180deg,#8d8e90 0px,#3e3f40 4px,#171718 9px,#161617 calc(100% - 22px),#3a3a3b calc(100% - 12px),#8e8f91 calc(100% - 2px),#9a9b9d 100%);box-shadow:inset 3.5px 0 1.5px -0.5px #9a9b9d, inset -3.5px 0 1.5px -0.5px #9a9b9d"></div>
<div id="screen" class="abs" style="left:22px;top:23px;width:406px;height:904px;border-radius:19px;overflow:hidden;background:#000">
<div class="abs" style="left:0;top:0;width:406px;height:51px;background:#6a50a5"></div>
<div class="abs" style="left:0;top:51px;width:406px;height:445px;background:#425b7a"></div>
<div class="abs" style="left:0;top:496px;width:406px;height:384px;background:#032c44"></div>
<div class="abs" style="left:17px;top:18px;font-size:14.5px;color:#fff;letter-spacing:0.2px">9:35</div>
<svg style="left:56px;top:20px" width="11" height="13" viewBox="0 0 11 13"><path d="M3 0 H11 V13 H0 V3 Z" fill="#fff"/><path d="M5 1.5 v2 M7 1.5 v2 M9 1.5 v2" stroke="#6a50a5" stroke-width="0.8"/></svg>
<svg style="left:77px;top:21px" width="10" height="11" viewBox="0 0 10 11"><rect x="0" y="0" width="10" height="11" fill="#fff"/><path d="M2.5 8.5 L5 2 L7.5 8.5 M3.5 6.5 H6.5" stroke="#6a50a5" stroke-width="1.2" fill="none"/></svg>
<svg style="left:189px;top:12px" width="28" height="28"><circle cx="14" cy="14" r="13" fill="#0d0d0f"/><circle cx="14" cy="14" r="7" fill="#1b1e24"/><circle cx="12" cy="14" r="1" fill="#3c6e9a"/><circle cx="16.5" cy="14" r="1" fill="#3c6e9a"/></svg>
<svg style="left:335px;top:19px" width="60" height="14" viewBox="0 0 60 14"><path d="M0.5 3 Q8 -2 15.5 3 L8 12.5 Z" fill="#fff"/><path d="M16.5 12.5 L28.5 0.5 V12.5 Z" fill="#fff"/><path d="M36 1.5 H37 V0 H41 V1.5 H43.5 V13 H35.5 V1.5 Z" fill="#fff"/></svg>
<div class="abs" style="right:10px;top:427px;font-size:49px;font-weight:normal;color:#e2661a;line-height:60px;-webkit-text-stroke:0.3px #e2661a">0</div>
<div class="btn" style="left:2px;top:502px;width:98px;background:#425b7a"><span>7</span></div>
<div class="btn" style="left:103.5px;top:502px;width:98px;background:#425b7a"><span>8</span></div>
<div class="btn" style="left:205px;top:502px;width:98px;background:#425b7a"><span>9</span></div>
<div class="btn" style="left:306px;top:502px;width:98px;background:#425b7a"><span>/</span></div>
<div class="btn" style="left:2px;top:578px;width:98px;background:#425b7a"><span>4</span></div>
<div class="btn" style="left:103.5px;top:578px;width:98px;background:#425b7a"><span>5</span></div>
<div class="btn" style="left:205px;top:578px;width:98px;background:#425b7a"><span>6</span></div>
<div class="btn" style="left:306px;top:578px;width:98px;background:#425b7a"><span class="op" style="font-size:44px;top:3px">*</span></div>
<div class="btn" style="left:2px;top:654px;width:98px;background:#425b7a"><span>1</span></div>
<div class="btn" style="left:103.5px;top:654px;width:98px;background:#425b7a"><span>2</span></div>
<div class="btn" style="left:205px;top:654px;width:98px;background:#425b7a"><span>3</span></div>
<div class="btn" style="left:306px;top:654px;width:98px;background:#425b7a"><span>-</span></div>
<div class="btn" style="left:2px;top:730px;width:197px;background:#425b7a"><span>0</span></div>
<div class="btn" style="left:203px;top:730px;width:99px;background:#52762f"><span class="op">x</span></div>
<div class="btn" style="left:305px;top:730px;width:99px;background:#425b7a"><span class="op">+</span></div>
<div class="btn" style="left:2px;top:806px;width:199px;background:#425b7a"><div class="abs" style="left:97px;top:43px;width:5.5px;height:5.5px;border-radius:50%;background:#e2661a"></div></div>
<div class="btn" style="left:205px;top:806px;width:199px;background:#425b7a"><span class="op" style="font-size:32px;top:0px">=</span></div>
<div class="abs" style="left:150px;top:890px;width:106px;height:4.5px;border-radius:2px;background:#eceef0"></div>
</div>
</div>
<div id="status" class="abs">
<div class="abs" style="left:17px;top:14px;width:10px;height:10px;border:1.6px solid #548af7;border-radius:3px;background:#2e3a52"></div>
<div class="st" style="left:32px">CalculatorApp</div>
<svg style="left:153px;top:13px" width="7" height="12" viewBox="0 0 7 12"><path d="M1 1 L6 6 L1 11" stroke="#a8adb5" stroke-width="1.4" fill="none"/></svg>
<div class="abs" style="left:172px;top:14px;width:10px;height:10px;border:1.6px solid #548af7;border-radius:3px;background:#2e3a52"></div>
<div class="st" style="left:187px">app</div>
<svg style="left:228px;top:13px" width="7" height="12" viewBox="0 0 7 12"><path d="M1 1 L6 6 L1 11" stroke="#a8adb5" stroke-width="1.4" fill="none"/></svg>
<div class="st" style="left:247px">src</div>
<svg style="left:283px;top:13px" width="7" height="12" viewBox="0 0 7 12"><path d="M1 1 L6 6 L1 11" stroke="#a8adb5" stroke-width="1.4" fill="none"/></svg>
<div class="abs" style="left:302px;top:14px;width:10px;height:10px;border:1.6px solid #548af7;border-radius:3px;background:#2e3a52"></div>
<div class="st" style="left:317px">main</div>
<svg style="left:366px;top:13px" width="7" height="12" viewBox="0 0 7 12"><path d="M1 1 L6 6 L1 11" stroke="#a8adb5" stroke-width="1.4" fill="none"/></svg>
<div class="st" style="left:383px">java</div>
<svg style="left:426px;top:13px" width="7" height="12" viewBox="0 0 7 12"><path d="M1 1 L6 6 L1 11" stroke="#a8adb5" stroke-width="1.4" fill="none"/></svg>
<div class="st" style="left:445px">com</div>
<svg style="left:490px;top:13px" width="7" height="12" viewBox="0 0 7 12"><path d="M1 1 L6 6 L1 11" stroke="#a8adb5" stroke-width="1.4" fill="none"/></svg>
<div class="st" style="left:509px">android</div>
<svg style="left:580px;top:13px" width="7" height="12" viewBox="0 0 7 12"><path d="M1 1 L6 6 L1 11" stroke="#a8adb5" stroke-width="1.4" fill="none"/></svg>
<div class="st" style="left:599px">calculator</div>
<svg style="left:685px;top:13px" width="7" height="12" viewBox="0 0 7 12"><path d="M1 1 L6 6 L1 11" stroke="#a8adb5" stroke-width="1.4" fill="none"/></svg>
<svg style="left:705px;top:10px" width="20" height="20" viewBox="0 0 18 18"><circle cx="8" cy="8" r="6.8" fill="none" stroke="#548af7" stroke-width="1.5"/><circle cx="8" cy="8" r="3.6" fill="none" stroke="#548af7" stroke-width="1.5"/><path d="M9 9 H17 L14 12.5 L17 16.5 H9 Z" fill="#2b2d30" stroke="#b57ad9" stroke-width="1.3" stroke-linejoin="round"/></svg>
<div class="st" style="left:729px">MainActivity</div>
<svg style="left:835px;top:13px" width="7" height="12" viewBox="0 0 7 12"><path d="M1 1 L6 6 L1 11" stroke="#a8adb5" stroke-width="1.4" fill="none"/></svg>
<svg style="left:854px;top:10px" width="19" height="19" viewBox="0 0 19 19"><circle cx="9.5" cy="9.5" r="8.5" fill="#5c2f2b" stroke="#db5c47" stroke-width="1.5"/><path d="M5.5 13 V7.5 Q5.5 6 7 6 Q9.5 6 9.5 8 V13 M9.5 8 Q9.5 6 11.5 6 Q13.5 6 13.5 7.5 V13" stroke="#db5c47" stroke-width="1.3" fill="none"/></svg>
<div class="st" style="left:879px">onDigit</div>
<div class="st" style="left:1639px">LF</div>
<div class="st" style="left:1678px">UTF-8</div>
<svg style="left:1748px;top:10px" width="18" height="18" viewBox="0 0 18 18" fill="none" stroke="#a8adb5" stroke-width="1.4" stroke-linejoin="round"><path d="M1 1.5 H17 V13 H12 L15 16.5 L9 13 H1 Z"/><path d="M9 4.5 V8.5 M9 10.3 v0.6"/></svg>
<div class="st" style="left:1787px">4 spaces</div>
<svg style="left:1880px;top:10px" width="18" height="18" viewBox="0 0 18 18" fill="none" stroke="#a8adb5" stroke-width="1.5" stroke-linejoin="round"><rect x="1" y="8" width="11" height="8.5" rx="1.5"/><path d="M8 8 V5 Q8 1.5 11.5 1.5 Q15 1.5 15 5 V6.5"/><path d="M6.5 11 V13"/></svg>
</div>
<div id="bottomline" class="abs"></div>
</body></html>
